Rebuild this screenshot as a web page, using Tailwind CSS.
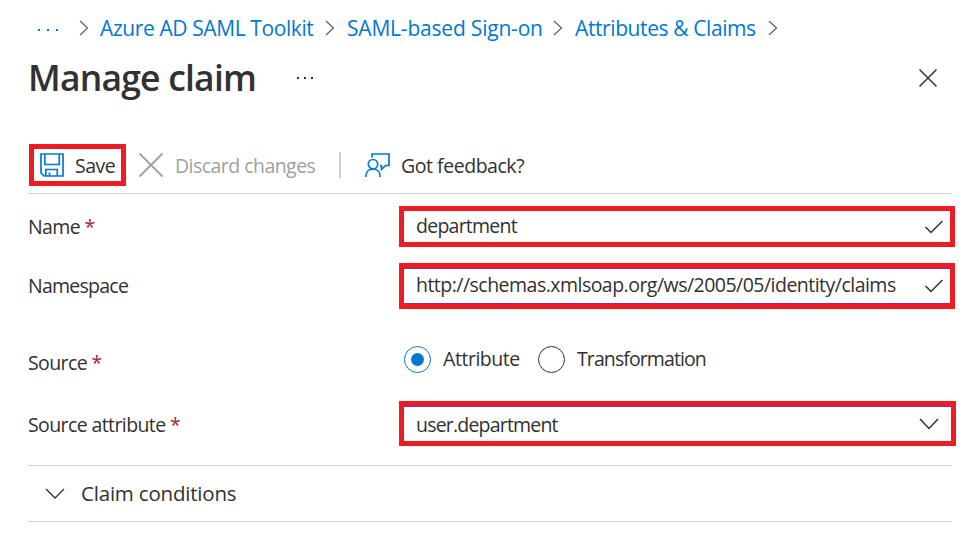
<!DOCTYPE html>
<html lang="en">
<head>
<meta charset="utf-8">
<title>Manage claim</title>
<script src="https://cdn.jsdelivr.net/npm/@tailwindcss/browser@4"></script>
</head>
<body class="bg-white w-[963px] h-[535px] overflow-hidden text-[#323130] font-['Open_Sans','Noto_Sans',sans-serif] text-[19.5px] leading-[28px] tracking-[-0.6px] whitespace-nowrap">
<nav class="flex items-center h-[56px] pl-[37px] text-[#0078d4] text-[21px] tracking-[-0.4px]">
  <svg class="w-[22px] h-[4px] mt-[3px]" viewBox="0 0 22 4" fill="#0078d4"><path d="M1 1h2v2H1zM10 1h2v2h-2zM19 1h2v2h-2z"/></svg>
  <svg class="w-[10px] h-[16px] ml-[20px]" viewBox="0 0 10 16" fill="none" stroke="#605e5c" stroke-width="1.200"><path d="M1 1l7.500 7-7.500 7"/></svg>
  <a class="ml-[11px] w-[229px] pb-px">Azure AD SAML Toolkit</a>
  <svg class="w-[10px] h-[16px] -ml-[4px]" viewBox="0 0 10 16" fill="none" stroke="#605e5c" stroke-width="1.200"><path d="M1 1l7.500 7-7.500 7"/></svg>
  <a class="ml-[12px] w-[197px] pb-px tracking-[-0.2px]">SAML-based Sign-on</a>
  <svg class="w-[10px] h-[16px] ml-[9px]" viewBox="0 0 10 16" fill="none" stroke="#605e5c" stroke-width="1.200"><path d="M1 1l7.500 7-7.500 7"/></svg>
  <a class="ml-[12px] w-[181px] pb-px">Attributes &amp; Claims</a>
  <svg class="w-[10px] h-[16px] ml-[12px]" viewBox="0 0 10 16" fill="none" stroke="#605e5c" stroke-width="1.200"><path d="M1 1l7.500 7-7.500 7"/></svg>
</nav>
<header class="flex items-center h-[44px] pl-[28px] pr-[25px]">
  <h1 class="w-[268px] pb-[2px] text-[35.5px] leading-[42px] font-semibold tracking-[-0.8px]">Manage claim</h1>
  <svg class="w-[18px] h-[4px]" viewBox="0 0 18 4" fill="#323130"><path d="M1 1h2v2H1zM8 1h2v2H8zM15 1h2v2h-2z"/></svg>
  <svg class="w-[20px] h-[20px] ml-auto" viewBox="0 0 20 20" fill="none" stroke="#323130" stroke-width="1.500"><path d="M1.500 1.500l17 17M18.500 1.500l-17 17"/></svg>
</header>
<div class="flex items-center h-[50px] mt-[44px] ml-[28px] mr-[11px] pb-[8px] pl-px border-b border-[#d2d0ce]">
  <button class="flex items-center w-[97px] h-[42px] border-[5px] border-[#ed1c24] pl-[6px]">
    <svg class="w-[24px] h-[24px]" viewBox="0 0 24 24" fill="none" stroke="#0078d4" stroke-width="1.700"><path d="M1 1h22v22H4l-3-3zM4.800 1v10.500h14.500V1M5.800 23v-6.500h11.500V23M9.500 23v-3.500"/></svg>
    <span class="ml-[11px] pt-[2px] tracking-[-0.5px]">Save</span>
  </button>
  <button class="flex items-center ml-[12px] w-[201px] text-[#a19f9d]">
    <svg class="w-[26px] h-[26px]" viewBox="0 0 26 26" fill="none" stroke="#a19f9d" stroke-width="1.800"><path d="M1.500 1.500l23 23M24.500 1.500l-23 23"/></svg>
    <span class="ml-[11px] pt-[2px] tracking-[-0.54px]">Discard changes</span>
  </button>
  <span class="w-[2px] h-[26px] bg-[#d2d0ce]"></span>
  <button class="flex items-center ml-[23px]">
    <svg class="w-[26px] h-[26px]" viewBox="0 0 26 26" fill="none" stroke="#0078d4" stroke-width="1.700"><path d="M8 5.500V2h17v11.500h-3.500l-4 4v-4H16"/><circle cx="9" cy="12.200" r="4.700"/><path d="M1.800 25c0-5 3-8 7.200-8s7.200 3 7.200 8"/></svg>
    <span class="ml-[11px] pt-[2px] tracking-[-0.46px]">Got feedback?</span>
  </button>
</div>
<form class="ml-[28px]">
  <div class="flex items-center h-[41px] mt-[12px]">
    <label class="w-[371px]">Name <span class="text-[#a4262c]">*</span></label>
    <div class="flex items-center justify-between w-[556px] h-[41px] border-[5px] border-[#ed1c24] pl-[12px] pr-[6px]">
      <span class="pb-[2px] tracking-[-0.75px]">department</span>
      <svg class="w-[20px] h-[14px]" viewBox="0 0 20 14" fill="none" stroke="#323130" stroke-width="1.500"><path d="M1.500 7l5.500 5.500L18.500 1"/></svg>
    </div>
  </div>
  <div class="flex items-center h-[46px] mt-[16px]">
    <label class="w-[371px] tracking-[-0.75px]">Namespace</label>
    <div class="w-[556px] h-[46px] border-[5px] border-[#ed1c24]">
      <div class="flex items-center justify-between h-full border-y border-[#8030b0] pl-[12px] pr-[6px]">
        <span class="pb-[2px] tracking-[-0.52px]">http://schemas.xmlsoap.org/ws/2005/05/identity/claims</span>
        <svg class="w-[20px] h-[14px]" viewBox="0 0 20 14" fill="none" stroke="#323130" stroke-width="1.500"><path d="M1.500 7l5.500 5.500L18.500 1"/></svg>
      </div>
    </div>
  </div>
  <div class="flex items-center h-[28px] mt-[36px]">
    <label class="w-[376px] pt-[8px]">Source <span class="text-[#a4262c]">*</span></label>
    <span class="grid place-items-center w-[27px] h-[27px] rounded-full border border-[#0078d4]"><span class="w-[13px] h-[13px] rounded-full bg-[#0078d4]"></span></span>
    <span class="ml-[12px] w-[95px] tracking-[-0.45px]">Attribute</span>
    <span class="w-[27px] h-[27px] rounded-full border border-[#323130]"></span>
    <span class="ml-[12px] tracking-[-0.9px]">Transformation</span>
  </div>
  <div class="flex items-center h-[45px] mt-[28px]">
    <label class="w-[371px] pt-[2px]">Source attribute <span class="text-[#a4262c]">*</span></label>
    <div class="w-[557px] h-[45px] border-[5px] border-[#ed1c24]">
      <div class="flex items-center justify-between h-full border-t border-[#8030b0] pl-[12px] pr-[12px]">
        <span class="pt-[2px] tracking-[-0.8px]">user.department</span>
        <svg class="w-[20px] h-[12px]" viewBox="0 0 20 12" fill="none" stroke="#323130" stroke-width="1.500"><path d="M1 1l9 9.500L19 1"/></svg>
      </div>
    </div>
  </div>
</form>
<section class="flex items-center h-[57px] mt-[19px] ml-[28px] mr-[11px] pl-[17px] border-y border-[#d2d0ce]">
  <svg class="w-[20px] h-[12px]" viewBox="0 0 20 12" fill="none" stroke="#323130" stroke-width="1.300"><path d="M1 1l9 9L19 1"/></svg>
  <span class="ml-[16px] pb-[2px] text-[20.5px] tracking-[-0.2px]">Claim conditions</span>
</section>
</body>
</html>
